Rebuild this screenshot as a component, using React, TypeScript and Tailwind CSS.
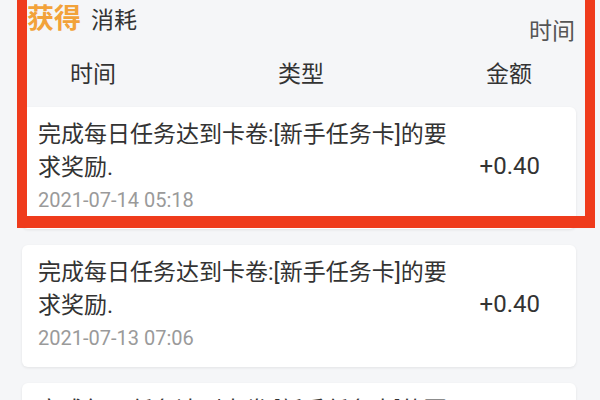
import React from "react";

const records = [
  { text: "完成每日任务达到卡卷:[新手任务卡]的要求奖励.", time: "2021-07-14 05:18", amount: "+0.40" },
  { text: "完成每日任务达到卡卷:[新手任务卡]的要求奖励.", time: "2021-07-13 07:06", amount: "+0.40" },
  { text: "完成每日任务达到卡卷:[新手任务卡]的要求奖励.", time: "2021-07-12 06:41", amount: "+0.40" },
];

export default function App() {
  return (
    <div
      className="relative w-[600px] h-[400px] overflow-hidden bg-[#f5f6f8] text-[#333]"
      style={{ fontFamily: "Roboto, 'Noto Sans CJK SC', sans-serif" }}
    >
      {/* ---- tabs + filter ---- */}
      <div className="flex items-start justify-between pl-[27px] pr-[25px] h-[52px]">
        <div className="flex items-baseline gap-[10px] pt-[1px]">
          <span className="text-[27px] leading-[36px] font-bold text-[#f2a23a]">获得</span>
          <span className="text-[23px] leading-[36px] text-[#333]">消耗</span>
        </div>
        <span className="text-[23px] leading-[30px] mt-[17px] text-[#555]">时间</span>
      </div>

      {/* ---- column headers ---- */}
      <div className="flex justify-between pl-[70px] pr-[68px] h-[55px] items-start">
        <span className="text-[23px] leading-[30px] mt-[8px]">时间</span>
        <span className="text-[23px] leading-[30px] mt-[8px]">类型</span>
        <span className="text-[23px] leading-[30px] mt-[8px]">金额</span>
      </div>

      {/* ---- record list ---- */}
      <div className="flex flex-col gap-4 pl-[22px] pr-[24px]">
        {records.map((r, i) => (
          <div
            key={i}
            className="flex items-center justify-between bg-white rounded-md shadow-[0_1px_3px_rgba(0,0,0,0.08)] pl-4 pr-[36px] pt-[11px] pb-[16px]"
          >
            <div className="w-[420px]">
              <div className="text-[23px] leading-[33px] text-[#333]">{r.text}</div>
              <div className="text-[20px] leading-[26px] mt-[3px] text-[#9a9a9a]">{r.time}</div>
            </div>
            <span className="text-[24px] leading-[30px] text-[#333]">{r.amount}</span>
          </div>
        ))}
      </div>

      {/* ---- red highlight annotation ---- */}
      <div className="absolute left-[17px] top-[-12px] w-[578px] h-[240px] border-[10px] border-b-[12px] border-[#ef3b1c] pointer-events-none" />
    </div>
  );
}
